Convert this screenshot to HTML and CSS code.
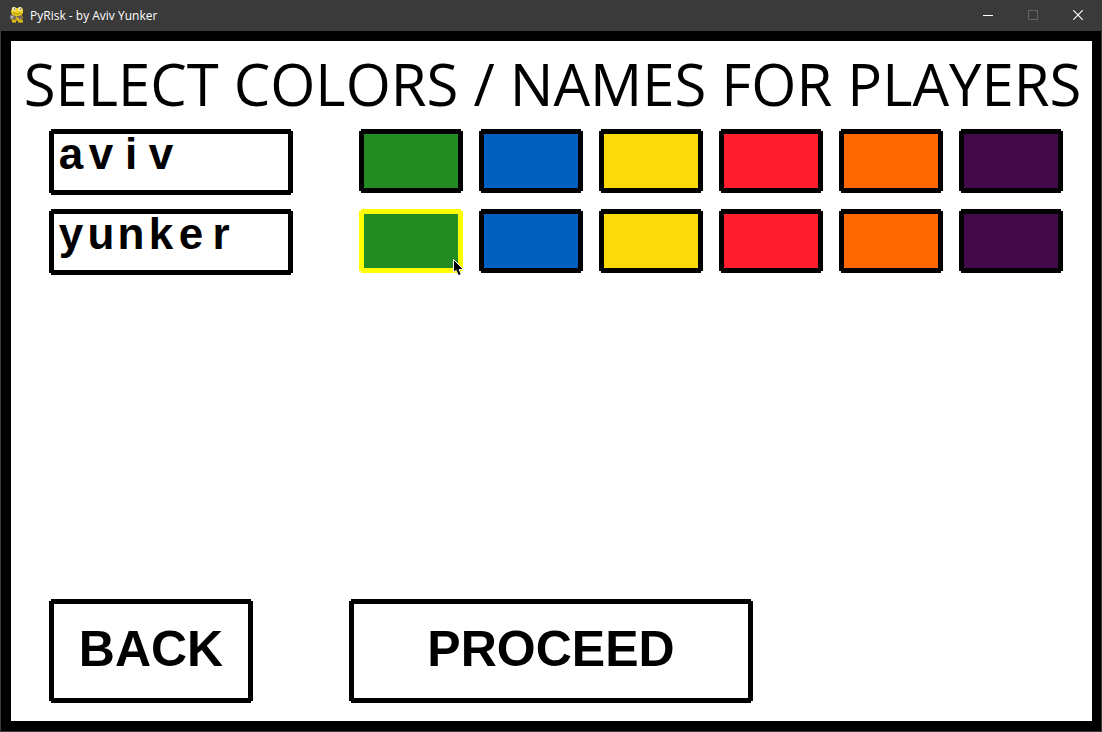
FILE: index.html
```html
<!DOCTYPE html>
<html lang="en">
<head>
<meta charset="utf-8">
<title>PyRisk - by Aviv Yunker</title>
<link rel="stylesheet" href="styles.css">
</head>
<body>
<header class="titlebar">
  <svg class="app-icon" width="16" height="18" viewBox="0 0 16 18" aria-hidden="true">
    <path d="M3 7 L12 7 L14 11 L13 15 L3 15 L1 12Z" fill="#b99a1c"/>
    <path d="M3 2 Q4 0 7 2 L9 2 Q12 0 14 3 L14 7 Q12 10 8 10 Q3 9 2 6Z" fill="#f0d21c"/>
    <circle cx="5" cy="3" r="2" fill="#f4f0c0"/><circle cx="11" cy="3" r="2" fill="#f4f0c0"/>
    <circle cx="5.5" cy="3" r=".8" fill="#555"/><circle cx="11.5" cy="3" r=".8" fill="#555"/>
    <path d="M4 7 Q8 9 12 7" fill="none" stroke="#a88c17"/>
    <path d="M4 12 L13 11" stroke="#6f6464" stroke-width="3"/>
    <path d="M7 11 L10 14" stroke="#d9bb1c" stroke-width="2"/>
    <circle cx="3" cy="11" r="1.8" fill="#bbb" stroke="#777"/>
    <path d="M3 15.5 H7 M9 15.5 H14" stroke="#e6c81c" stroke-width="2"/>
  </svg>
  <h1 class="window-title">PyRisk - by Aviv Yunker</h1>
  <div class="window-controls">
    <button class="window-button" type="button" aria-label="Minimize"><svg width="10" height="10" viewBox="0 0 10 10"><path d="M0 5.5H10" stroke="#fff"/></svg></button>
    <button class="window-button" type="button" aria-label="Maximize" disabled><svg width="10" height="10" viewBox="0 0 10 10"><path d="M.5 .5H9.5V9.5H.5Z" fill="none" stroke="#646464"/></svg></button>
    <button class="window-button" type="button" aria-label="Close"><svg width="10" height="10" viewBox="0 0 10 10"><path d="M.3 .3L9.7 9.7M9.7 .3L.3 9.7" stroke="#fff" stroke-width="1.2"/></svg></button>
  </div>
</header>
<main class="screen">
  <h2 class="heading">SELECT COLORS / NAMES FOR PLAYERS</h2>
  <form class="setup">
    <div class="player">
      <div class="name outlined" role="group" aria-label="Player 1 name">
        <input class="letter" aria-label="Letter 1" maxlength="1" value="a">
        <input class="letter" aria-label="Letter 2" maxlength="1" value="v">
        <input class="letter" aria-label="Letter 3" maxlength="1" value="i">
        <input class="letter" aria-label="Letter 4" maxlength="1" value="v">
      </div>
      <div class="swatches" role="radiogroup" aria-label="Player 1 color">
        <input class="swatch outlined green" type="radio" name="color1" aria-label="Green">
        <input class="swatch outlined blue" type="radio" name="color1" aria-label="Blue">
        <input class="swatch outlined yellow" type="radio" name="color1" aria-label="Yellow">
        <input class="swatch outlined red" type="radio" name="color1" aria-label="Red">
        <input class="swatch outlined orange" type="radio" name="color1" aria-label="Orange">
        <input class="swatch outlined purple" type="radio" name="color1" aria-label="Purple">
      </div>
    </div>
    <div class="player">
      <div class="name outlined" role="group" aria-label="Player 2 name">
        <input class="letter" aria-label="Letter 1" maxlength="1" value="y">
        <input class="letter" aria-label="Letter 2" maxlength="1" value="u">
        <input class="letter" aria-label="Letter 3" maxlength="1" value="n">
        <input class="letter" aria-label="Letter 4" maxlength="1" value="k">
        <input class="letter" aria-label="Letter 5" maxlength="1" value="e">
        <input class="letter" aria-label="Letter 6" maxlength="1" value="r">
      </div>
      <div class="swatches" role="radiogroup" aria-label="Player 2 color">
        <input class="swatch outlined green" type="radio" name="color2" aria-label="Green" checked>
        <input class="swatch outlined blue" type="radio" name="color2" aria-label="Blue">
        <input class="swatch outlined yellow" type="radio" name="color2" aria-label="Yellow">
        <input class="swatch outlined red" type="radio" name="color2" aria-label="Red">
        <input class="swatch outlined orange" type="radio" name="color2" aria-label="Orange">
        <input class="swatch outlined purple" type="radio" name="color2" aria-label="Purple">
      </div>
    </div>
    <div class="actions">
      <button class="action outlined" type="button">BACK</button>
      <button class="action outlined proceed" type="submit">PROCEED</button>
    </div>
  </form>
</main>
<svg class="pointer" width="12" height="18" viewBox="0 0 12 18" aria-hidden="true">
  <path d="M.5 .5V13.5L3.5 10.8L6 16H8L6 10.5H10.5Z" fill="#000" stroke="#fff"/>
  <path d="M4 10L6.6 15.5" stroke="#000" stroke-width="2"/>
</svg>
</body>
</html>
```
FILE: styles.css
```css
* {
  box-sizing: border-box;
}

body {
  margin: 0;
  min-height: 100vh;
  display: flex;
  flex-direction: column;
  background: #3a3a3a;
  font-family: "Liberation Sans", sans-serif;
}

.titlebar {
  display: flex;
  align-items: center;
  height: 31px;
  padding: 0 1px 1px 9px;
  color: #fff;
}

.app-icon {
  margin-right: 5px;
}

.window-title {
  margin: 0;
  padding-top: 2px;
  font: 400 12px/16px "Open Sans", sans-serif;
}

.window-controls {
  display: flex;
  align-self: stretch;
  margin-left: auto;
}

.window-button {
  display: flex;
  align-items: center;
  justify-content: center;
  width: 45px;
  padding: 0;
  border: 0;
  background: none;
}

.window-button:last-child {
  width: 46px;
}

.screen {
  flex: 1;
  display: flex;
  flex-direction: column;
  margin: 0 1px 1px;
  border: 10px solid #000;
  border-right-width: 9px;
  background: #fff;
}

.heading {
  margin: 0;
  padding: 0 0 2px 2px;
  font: 400 58px/86px "Open Sans", sans-serif;
  text-align: center;
  white-space: nowrap;
}

.setup {
  flex: 1;
  display: flex;
  flex-direction: column;
  gap: 14px;
  padding: 0 29px 18px 38px;
}

/* Thick frame whose four corners are notched by two pixels */
.outlined {
  border: 5px solid #000;
  clip-path: polygon(2px 0, calc(100% - 2px) 0, calc(100% - 2px) 2px, 100% 2px, 100% calc(100% - 2px), calc(100% - 2px) calc(100% - 2px), calc(100% - 2px) 100%, 2px 100%, 2px calc(100% - 2px), 0 calc(100% - 2px), 0 2px, 2px 2px);
}

.player {
  display: grid;
  grid-template-columns: 244fr 704fr;
  gap: 66px;
}

.name {
  display: flex;
  align-items: flex-start;
  height: 66px;
  padding-left: 2px;
}

.letter {
  width: 30px;
  height: 50px;
  margin-top: -5px;
  padding: 0;
  border: 0;
  outline: 0;
  background: none;
  color: #000;
  font: 700 44px/50px "Liberation Sans", sans-serif;
  text-align: center;
}

.swatches {
  display: grid;
  grid-template-columns: repeat(6, 1fr);
  gap: 16px;
}

.swatch {
  appearance: none;
  height: 64px;
  margin: 0;
}

.swatch:checked {
  border-color: #ff0;
}

.green { background: #228b22; }
.blue { background: #005fbf; }
.yellow { background: #fcd908; }
.red { background: #ff1d2d; }
.orange { background: #ff6700; }
.purple { background: #430a4a; }

.actions {
  display: flex;
  gap: 96px;
  margin-top: auto;
}

.action {
  width: 204px;
  height: 104px;
  padding: 0 0 4px;
  background-color: #fff;
  color: #000;
  font: 700 50px/56px "Liberation Sans", sans-serif;
}

.proceed {
  width: 404px;
}

.pointer {
  position: absolute;
  left: 453px;
  top: 259px;
}
```
